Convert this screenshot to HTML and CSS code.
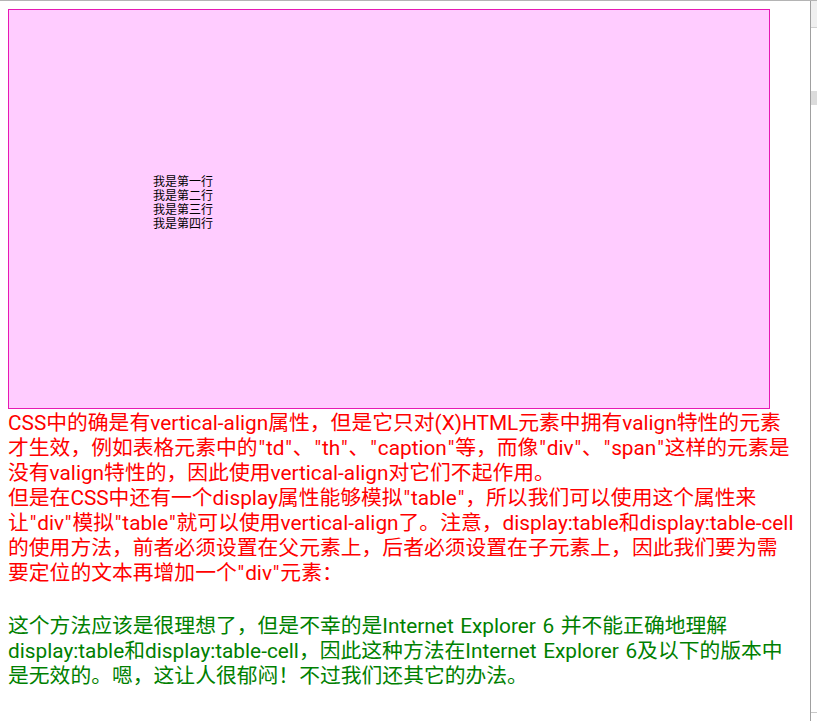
FILE: index.html
```html
<!DOCTYPE html>
<html lang="zh-CN">
<head>
<meta charset="utf-8">
<title>vertical-align</title>
<link rel="stylesheet" href="styles.css">
</head>
<body>
<div class="frame">
  <div class="page">
    <div class="demo">
      <div class="demo-cell">
        我是第一行<br>我是第二行<br>我是第三行<br>我是第四行
      </div>
    </div>
    <p class="note red">CSS中的确是有vertical-align属性，但是它只对(X)HTML元素中拥有valign特性的元素<br>才生效，例如表格元素中的<q>td</q>、<q>th</q>、<q>caption</q>等，而像<q>div</q>、<q>span</q>这样的元素是<br>没有valign特性的，因此使用vertical-align对它们不起作用。<br>但是在CSS中还有一个display属性能够模拟<q>table</q>，所以我们可以使用这个属性来<br>让<q>div</q>模拟<q>table</q>就可以使用vertical-align了。注意，display:table和display:table-cell<br>的使用方法，前者必须设置在父元素上，后者必须设置在子元素上，因此我们要为需<br>要定位的文本再增加一个<q>div</q>元素：</p>
    <p class="note green">这个方法应该是很理想了，但是不幸的是Internet Explorer 6 并不能正确地理解<br>display:table和display:table-cell，因此这种方法在Internet Explorer 6及以下的版本中<br>是无效的。嗯，这让人很郁闷！不过我们还其它的办法。</p>
  </div>
  <div class="scrollbar">
    <div class="sb-top"></div>
    <div class="sb-gap"></div>
    <div class="sb-thumb"></div>
    <div class="sb-fill"></div>
    <div class="sb-bottom"></div>
  </div>
</div>
</body>
</html>
```

FILE: styles.css
```css
html, body {
  margin: 0;
  padding: 0;
  background: #fff;
}

.frame {
  display: flex;
  height: 720px;
  border-top: 1px solid #b4b4b4;
  overflow: hidden;
}

.page {
  box-sizing: border-box;
  width: 811px;
  flex: none;
  padding: 8px;
  border-right: 1px solid #a0a0a0;
  font-family: Roboto, "Noto Sans CJK SC", sans-serif;
}

.demo {
  box-sizing: border-box;
  display: flex;
  align-items: center;
  width: 762px;
  height: 400px;
  padding: 0 0 14px 144px;
  background: #fcf;
  border: 1px solid #e619b3;
}

.demo-cell {
  font-family: "Noto Sans CJK SC", sans-serif;
  font-size: 12px;
  line-height: 14px;
  color: #000;
}

.note {
  margin: 0;
  font-size: 20.8px;
  line-height: 25px;
  word-spacing: 1.4px;
  white-space: nowrap;
}

.note q {
  quotes: '"' '"';
}

.note q::before,
.note q::after {
  padding: 0 0.85px;
}

.red {
  margin-top: 2px;
  color: #f00;
}

.green {
  margin-top: 28px;
  color: #008000;
}

.scrollbar {
  flex: 1;
  display: flex;
  flex-direction: column;
}

.sb-top {
  height: 26px;
  background: #f0f0f0;
  border-bottom: 1px solid #d0d0d0;
}

.sb-gap {
  height: 63px;
}

.sb-thumb {
  height: 14px;
  background: #dcdcdc;
}

.sb-fill {
  flex: 1;
}

.sb-bottom {
  height: 8px;
  border-top: 1px solid #c8c8c8;
}
```
